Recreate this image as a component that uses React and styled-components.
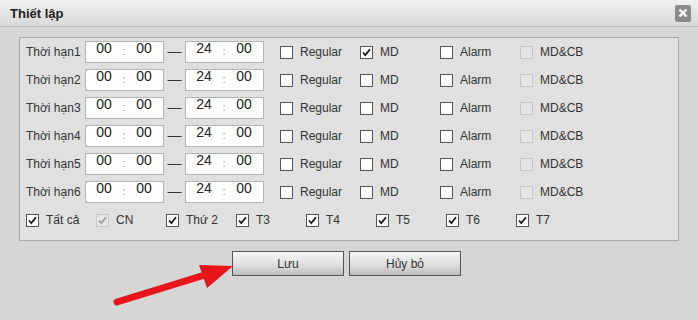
import styled, { createGlobalStyle } from "styled-components";

const GlobalStyle = createGlobalStyle`
    body {
        margin: 0;
        background: #d6d6d6;
        font-family: "Liberation Sans", Arial, sans-serif;
    }
`;

const Window = styled.div`
    position: relative;
    width: 698px;
    height: 320px;
    background: #d6d6d6;
    overflow: hidden;
`;
const TitleBar = styled.div`
    height: 26px;
    border-bottom: 1px solid #bcbcbc;
    background: linear-gradient(#f0f0f0, #d9d9d9);
    display: flex;
    align-items: center;
    justify-content: space-between;
    padding: 0 7px 0 10px;
`;
const Title = styled.span`
    font-size: 13px;
    font-weight: bold;
    color: #222;
`;
const Close = styled.div`
    width: 16px;
    height: 17px;
    border-radius: 2px;
    background: #8b8b8b;
    display: flex;
    align-items: center;
    justify-content: center;
`;
const Body = styled.div`
    padding: 10px 19px 0;
`;
const Panel = styled.div`
    border: 1px solid #a9a9a9;
    background: #e0e0e0;
    padding: 0 6px 6px;
`;
const Row = styled.div`
    display: flex;
    align-items: center;
    height: 28px;
`;
const Label = styled.span`
    width: 59px;
    font-size: 12px;
    color: #333;
`;
const TimeBox = styled.div`
    width: 77px;
    height: 20px;
    border: 1px solid #b5b5b5;
    background: #fff;
    display: flex;
    align-items: flex-start;
`;
const Digits = styled.span`
    width: 36px;
    text-align: center;
    font-size: 14px;
    line-height: 16px;
    margin-top: -2px;
    color: #222;
`;
const Colon = styled.span`
    width: 4px;
    text-align: center;
    font-size: 11px;
    line-height: 16px;
    margin-top: 1px;
    color: #888;
`;
const Dash = styled.span`
    width: 21px;
    text-align: center;
    font-size: 14px;
    color: #333;
    margin-top: -2px;
`;
const Modes = styled.div`
    display: flex;
    margin-left: 16px;
`;
const Option = styled.label`
    display: flex;
    align-items: center;
    gap: 7px;
    width: ${(p) => p.$w}px;
    font-size: 12px;
    color: #333;
`;
const Box = styled.span`
    width: 11px;
    height: 11px;
    border: 1px solid ${(p) => (p.$disabled ? "#c6c6c6" : "#555")};
    background: ${(p) => (p.$disabled ? "#e6e6e6" : "#fff")};
    display: flex;
    align-items: center;
    justify-content: center;
    flex-shrink: 0;
`;
const DayRow = styled(Row)`
    display: grid;
    grid-template-columns: repeat(8, 70px);
`;
const Actions = styled.div`
    display: flex;
    justify-content: center;
    gap: 5px;
    margin-top: 10px;
    padding-right: 5px;
`;
const Button = styled.button`
    width: 112px;
    height: 25px;
    border: 1px solid #555;
    background: linear-gradient(#f6f6f6, #dcdcdc 60%, #bdbdbd);
    font-family: inherit;
    font-size: 12px;
    color: #333;
    padding: 0;
`;
const Arrow = styled.svg`
    position: absolute;
    left: 0;
    top: 0;
    pointer-events: none;
`;

const Checkbox = ({ label, checked, disabled, w = 80 }) => (
    <Option $w={w}>
        <Box $disabled={disabled}>
            {checked && (
                <svg width="11" height="11" viewBox="0 0 11 11">
                    <path d="M2 5.5 L4.3 8 L9 2.2" fill="none" stroke={disabled ? "#9a9a9a" : "#1a1a1a"} strokeWidth="1.8" />
                </svg>
            )}
        </Box>
        {label}
    </Option>
);

const TimeInput = ({ h, m }) => (
    <TimeBox>
        <Digits>{h}</Digits>
        <Colon>:</Colon>
        <Digits>{m}</Digits>
    </TimeBox>
);

const periods = [1, 2, 3, 4, 5, 6];
const days = [
    { label: "Tất cả", checked: true },
    { label: "CN", checked: true, disabled: true },
    { label: "Thứ 2", checked: true },
    { label: "T3", checked: true },
    { label: "T4", checked: true },
    { label: "T5", checked: true },
    { label: "T6", checked: true },
    { label: "T7", checked: true },
];

const App = () => {
    return (
        <Window>
            <GlobalStyle />
            <TitleBar>
                <Title>Thiết lập</Title>
                <Close>
                    <svg width="10" height="10" viewBox="0 0 10 10">
                        <path d="M1.5 1.5 L8.5 8.5 M8.5 1.5 L1.5 8.5" stroke="#fff" strokeWidth="2.4" />
                    </svg>
                </Close>
            </TitleBar>
            <Body>
                <Panel>
                    {periods.map((n) => (
                        <Row key={n}>
                            <Label>Thời hạn{n}</Label>
                            <TimeInput h="00" m="00" />
                            <Dash>—</Dash>
                            <TimeInput h="24" m="00" />
                            <Modes>
                                <Checkbox label="Regular" />
                                <Checkbox label="MD" checked={n === 1} />
                                <Checkbox label="Alarm" />
                                <Checkbox label="MD&CB" disabled />
                            </Modes>
                        </Row>
                    ))}
                    <DayRow>
                        {days.map((d) => (
                            <Checkbox key={d.label} w={70} {...d} />
                        ))}
                    </DayRow>
                </Panel>
                <Actions>
                    <Button>Lưu</Button>
                    <Button>Hủy bỏ</Button>
                </Actions>
            </Body>
            <Arrow width="698" height="320">
                <line x1="117" y1="302" x2="208" y2="274" stroke="#e8151b" strokeWidth="7" strokeLinecap="round" />
                <polygon points="233,266 199,265 207,288" fill="#e8151b" />
            </Arrow>
        </Window>
    );
};

export default App;
